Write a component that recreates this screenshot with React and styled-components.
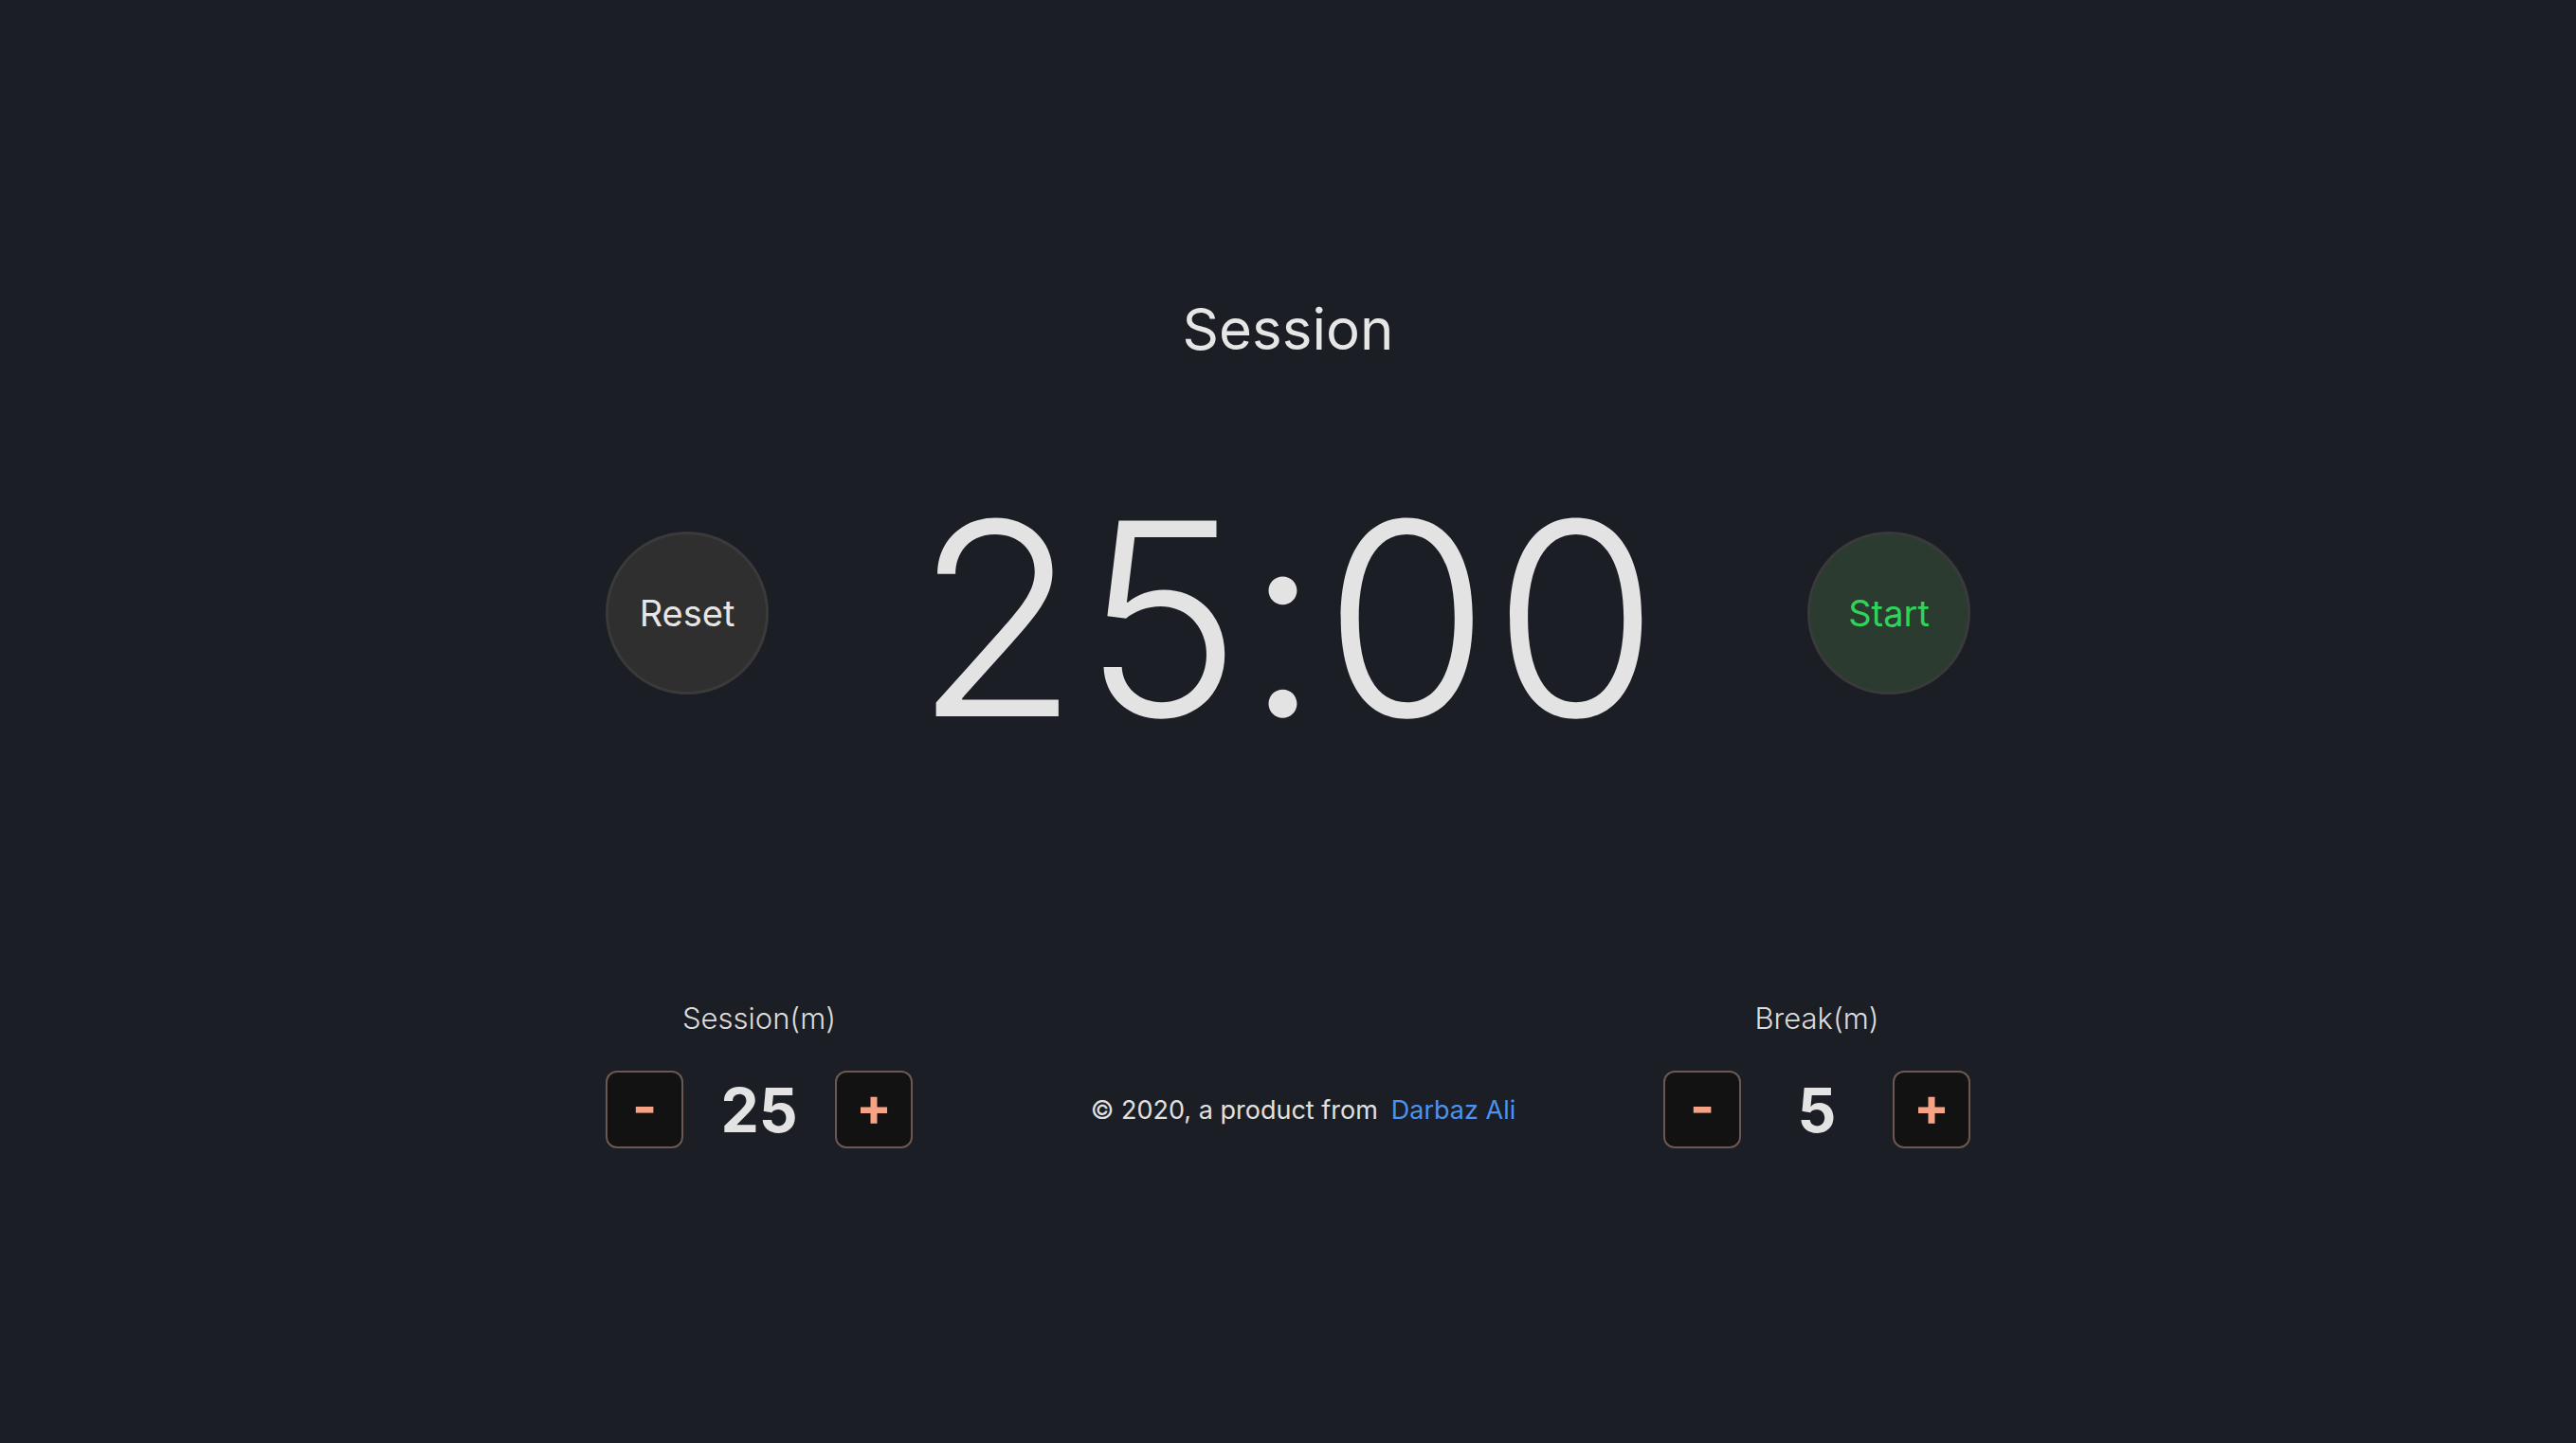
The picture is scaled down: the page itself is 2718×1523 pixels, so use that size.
import React, { useState } from "react";
import styled, { createGlobalStyle } from "styled-components";

const Global = createGlobalStyle`
  html, body { margin: 0; padding: 0; background: #1b1e25; }
  body { font-family: Inter, "Noto Sans", "Liberation Sans", sans-serif; color: #e3e3e3; }
  * { box-sizing: border-box; }
`;

const Page = styled.div`
  min-height: 100vh;
  background: #1b1e25;
  display: flex;
  justify-content: center;
`;

const Main = styled.main`
  width: 1440px;
  padding-top: 311px;
  display: flex;
  flex-direction: column;
`;

const Title = styled.h1`
  margin: 0;
  text-align: center;
  font-size: 60px;
  line-height: 72px;
  font-weight: 400;
  color: #e6e6e6;
`;

const TimerRow = styled.section`
  margin-top: 116px;
  display: flex;
  align-items: center;
  justify-content: space-between;
`;

const RoundButton = styled.button`
  width: 172px;
  height: 172px;
  border-radius: 50%;
  border: 3px solid #3a3a3a;
  background: ${(p) => (p.$start ? "#2b3b30" : "#2f2f2f")};
  color: ${(p) => (p.$start ? "#2fd35a" : "#e6e6e6")};
  font-family: inherit;
  font-size: 38px;
  font-weight: 400;
  display: flex;
  align-items: center;
  justify-content: center;
  cursor: pointer;
  padding: 0;
`;

const Clock = styled.div`
  padding-top: 12px;
  font-size: 284px;
  font-weight: 300;
  line-height: 1;
  letter-spacing: 3px;
  color: #e3e3e3;
`;

const ControlsRow = styled.section`
  margin-top: 260px;
  display: flex;
  justify-content: space-between;
  align-items: flex-end;
`;

const Group = styled.div`
  display: flex;
  flex-direction: column;
  align-items: center;
  gap: 35px;
`;

const Label = styled.div`
  font-size: 31px;
  font-weight: 300;
  line-height: 40px;
  color: #dcdcdc;
`;

const Stepper = styled.div`
  display: flex;
  align-items: center;
`;

const StepButton = styled.button`
  width: 82px;
  height: 82px;
  border-radius: 12px;
  border: 2px solid #6b5852;
  background: #121212;
  color: #f6a284;
  font-family: inherit;
  font-size: 56px;
  font-weight: 700;
  line-height: 1;
  display: flex;
  align-items: center;
  justify-content: center;
  padding: 0 0 6px;
  cursor: pointer;
`;

const Value = styled.div`
  width: 160px;
  text-align: center;
  font-size: 64px;
  font-weight: 700;
  color: #e3e3e3;
`;

const Footer = styled.footer`
  height: 82px;
  padding-left: 32px;
  display: flex;
  align-items: center;
  font-size: 27px;
  color: #e0e0e0;
`;

const Link = styled.a`
  margin-left: 14px;
  color: #4b93ee;
  text-decoration: none;
`;

function Control({ label, value, onDec, onInc }) {
  return (
    <Group>
      <Label>{label}</Label>
      <Stepper>
        <StepButton onClick={onDec}>-</StepButton>
        <Value>{value}</Value>
        <StepButton onClick={onInc}>+</StepButton>
      </Stepper>
    </Group>
  );
}

export default function App() {
  const [session, setSession] = useState(25);
  const [brk, setBrk] = useState(5);
  return (
    <Page>
      <Global />
      <Main>
        <Title>Session</Title>
        <TimerRow>
          <RoundButton>Reset</RoundButton>
          <Clock>{String(session).padStart(2, "0")}:00</Clock>
          <RoundButton $start>Start</RoundButton>
        </TimerRow>
        <ControlsRow>
          <Control
            label="Session(m)"
            value={session}
            onDec={() => setSession((s) => Math.max(1, s - 1))}
            onInc={() => setSession((s) => Math.min(60, s + 1))}
          />
          <Footer>
            © 2020, a product from
            <Link href="#">Darbaz Ali</Link>
          </Footer>
          <Control
            label="Break(m)"
            value={brk}
            onDec={() => setBrk((s) => Math.max(1, s - 1))}
            onInc={() => setBrk((s) => Math.min(60, s + 1))}
          />
        </ControlsRow>
      </Main>
    </Page>
  );
}
